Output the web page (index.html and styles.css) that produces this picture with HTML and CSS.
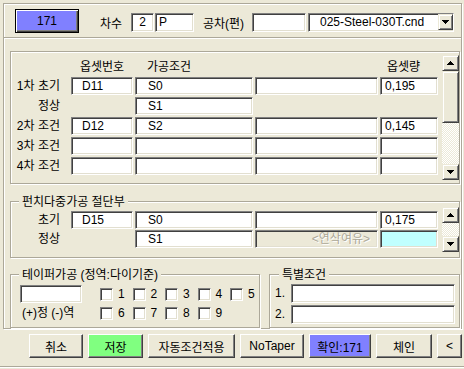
FILE: index.html
```html
<!DOCTYPE html>
<html lang="ko">
<head>
  <meta charset="UTF-8" />
  <meta name="viewport" content="width=device-width, initial-scale=1.0"/>
  <title>옵셋 조건</title>
  <link rel="stylesheet" href="styles.css">
</head>
<body>

<div class="dialog">
  <div class="etched frame">
    <!-- TOP ROW -->
    <div class="top-row">
      <button class="btn btn-default btn-blue top-num">171</button>
      <span class="lbl lbl-chasu">차수</span>
      <div class="field f-cha">2</div>
      <div class="field f-p">P</div>
      <span class="lbl lbl-tol">공차(편)</span>
      <div class="field f-tol"></div>
      <div class="field combo">
        <span>025-Steel-030T.cnd</span>
        <span class="raised combo-btn">
          <svg width="7" height="4" viewBox="0 0 7 4"><path d="M0 0h7v1H6v1H5v1H4v1H3V3H2V2H1V1H0z"/></svg>
        </span>
      </div>
    </div>
    <div class="sep"></div>

    <div class="main">
      <!-- OFFSET TABLE -->
      <div class="etched offset-panel">
        <div class="grid offset-grid">
          <span></span>
          <span class="head h-num">옵셋번호</span>
          <span class="head h-cond">가공조건</span>
          <span></span>
          <span class="head h-amt">옵셋량</span>

          <span class="row-lbl">1차 초기</span>
          <div class="field c1">D11</div>
          <div class="field c2">S0</div>
          <div class="field"></div>
          <div class="field c4">0,195</div>

          <span class="row-lbl">정상</span>
          <span></span>
          <div class="field c2">S1</div>
          <span></span>
          <span></span>

          <span class="row-lbl">2차 조건</span>
          <div class="field c1">D12</div>
          <div class="field c2">S2</div>
          <div class="field"></div>
          <div class="field c4">0,145</div>

          <span class="row-lbl">3차 조건</span>
          <div class="field"></div>
          <div class="field"></div>
          <div class="field"></div>
          <div class="field"></div>

          <span class="row-lbl">4차 조건</span>
          <div class="field"></div>
          <div class="field"></div>
          <div class="field"></div>
          <div class="field"></div>
        </div>
        <div class="scrollbar sb-table">
          <span class="raised sb-btn">
            <svg width="7" height="4" viewBox="0 0 7 4"><path d="M3 0h1v1h1v1h1v1h1v1H0V3h1V2h1V1h1z"/></svg>
          </span>
          <span class="raised sb-thumb"></span>
          <span class="sb-track"></span>
          <span class="raised sb-btn">
            <svg width="7" height="4" viewBox="0 0 7 4"><path d="M0 0h7v1H6v1H5v1H4v1H3V3H2V2H1V1H0z"/></svg>
          </span>
        </div>
      </div>

      <!-- PUNCH -->
      <div class="etched group punch">
        <div class="group-title">펀치다중가공 절단부</div>
        <div class="punch-body">
          <div class="grid punch-grid">
            <span class="row-lbl">초기</span>
            <div class="field c1">D15</div>
            <div class="field c2">S0</div>
            <div class="field"></div>
            <div class="field c4">0,175</div>

            <span class="row-lbl">정상</span>
            <span></span>
            <div class="field c2">S1</div>
            <div class="field disabled">&lt;연삭여유&gt;</div>
            <div class="field cyan"></div>
          </div>
          <div class="scrollbar sb-punch">
            <span class="raised sb-btn">
              <svg width="7" height="4" viewBox="0 0 7 4"><path d="M3 0h1v1h1v1h1v1h1v1H0V3h1V2h1V1h1z"/></svg>
            </span>
            <span class="sb-track"></span>
            <span class="raised sb-btn">
              <svg width="7" height="4" viewBox="0 0 7 4"><path d="M0 0h7v1H6v1H5v1H4v1H3V3H2V2H1V1H0z"/></svg>
            </span>
          </div>
        </div>
      </div>

      <!-- TAPER + SPECIAL -->
      <div class="bottom-groups">
        <div class="etched group taper">
          <div class="group-title">테이퍼가공 (정역:다이기준)</div>
          <div class="taper-body">
            <div class="field taper-in"></div>
            <div class="checks">
              <span class="chk-item"><span class="chk"></span>1</span>
              <span class="chk-item"><span class="chk"></span>2</span>
              <span class="chk-item"><span class="chk"></span>3</span>
              <span class="chk-item"><span class="chk"></span>4</span>
              <span class="chk-item"><span class="chk"></span>5</span>
            </div>
            <span class="taper-lbl">(+)정 (-)역</span>
            <div class="checks">
              <span class="chk-item"><span class="chk"></span>6</span>
              <span class="chk-item"><span class="chk"></span>7</span>
              <span class="chk-item"><span class="chk"></span>8</span>
              <span class="chk-item"><span class="chk"></span>9</span>
            </div>
          </div>
        </div>

        <div class="etched group special">
          <div class="group-title">특별조건</div>
          <div class="special-body">
            <span>1.</span>
            <div class="field"></div>
            <span>2.</span>
            <div class="field"></div>
          </div>
        </div>
      </div>
    </div>
  </div>

  <!-- BUTTONS -->
  <div class="buttons">
    <button class="btn w-cancel">취소</button>
    <button class="btn btn-green w-save">저장</button>
    <button class="btn w-auto">자동조건적용</button>
    <button class="btn w-notaper">NoTaper</button>
    <button class="btn btn-blue w-ok">확인:171</button>
    <button class="btn w-chain">체인</button>
    <button class="btn w-back">&lt;</button>
  </div>
  <div class="footer-line"></div>
</div>

</body>
</html>
```

FILE: styles.css
```css
* {
  box-sizing: border-box;
}

body {
  margin: 0;
  background: #ece9d8;
  font-family: "Liberation Sans", "Noto Sans CJK KR", sans-serif;
  font-size: 12px;
  color: #000;
}

.dialog {
  width: 464px;
  height: 369px;
  padding-top: 3px;
  overflow: hidden;
}

/* etched frame / group lines */
.etched {
  border: 1px solid #aca899;
  box-shadow: inset 1px 1px 0 #fff, 1px 1px 0 #fff;
}

.frame {
  margin-left: 3px;
  width: 459px;
  height: 326px;
}

.top-row {
  display: flex;
  align-items: center;
  height: 33px;
  padding-left: 11px;
}

.sep {
  height: 2px;
  border-top: 1px solid #aca899;
  border-bottom: 1px solid #fff;
}

.main {
  padding: 12px 0 0 6px;
}

/* sunken edit */
.field {
  height: 18px;
  background: #fff;
  border: 1px solid;
  border-color: #808080 #fff #fff #808080;
  box-shadow: inset 1px 1px 0 #404040, inset -1px -1px 0 #e2dfd0;
  line-height: 16px;
  white-space: nowrap;
  overflow: hidden;
}

.raised {
  background: #ece9d8;
  border: 1px solid;
  border-color: #ece9d8 #404040 #404040 #ece9d8;
  box-shadow: inset 1px 1px 0 #fff, inset -1px -1px 0 #808080;
}

.btn {
  height: 24px;
  padding: 0;
  font: inherit;
  color: #000;
  background: #ece9d8;
  border: 1px solid;
  border-color: #fff #404040 #404040 #fff;
  box-shadow: inset -1px -1px 0 #808080;
}

.btn-default {
  border-color: #000;
  box-shadow: inset 1px 1px 0 #fff, inset -1px -1px 0 #404040, inset -2px -2px 0 #808080;
}

.btn-blue {
  background: #8080ff;
}

.btn-green {
  background: #80ff80;
}

/* top row */
.top-num {
  width: 64px;
}

.lbl {
  margin-top: 3px;
}

.lbl-chasu {
  width: 31px;
  margin-left: 21px;
}

.lbl-tol {
  width: 49px;
  margin-left: 9px;
}

.top-row .field {
  height: 19px;
  margin-top: 3px;
  line-height: 17px;
}

.f-cha {
  width: 23px;
  text-align: center;
}

.f-p {
  width: 39px;
  margin-left: 1px;
  padding-left: 3px;
}

.f-tol {
  width: 54px;
}

.combo {
  width: 146px;
  margin-left: 2px;
  display: flex;
  align-items: center;
  justify-content: space-between;
  padding-left: 11px;
}

.combo-btn {
  width: 15px;
  height: 16px;
  display: flex;
  align-items: center;
  justify-content: center;
}

/* offset table */
.offset-panel {
  width: 450px;
  height: 133px;
  display: flex;
  align-items: flex-start;
}

.grid {
  display: grid;
  grid-template-columns: 58px 62px 118px 123px 58px;
  column-gap: 2px;
}

.offset-grid {
  grid-template-rows: 23px repeat(5, 18px);
  row-gap: 2px;
}

.head {
  align-self: end;
  line-height: 16px;
}

.h-num {
  text-align: center;
}

.h-cond {
  padding-left: 12px;
}

.h-amt {
  padding-left: 7px;
}

.row-lbl {
  text-align: right;
  padding-right: 9px;
  line-height: 18px;
  white-space: nowrap;
}

.c1 {
  padding-left: 10px;
}

.c2 {
  padding-left: 12px;
}

.c4 {
  padding-left: 4px;
}

.disabled {
  background: #ece9d8;
  color: #aca899;
  text-shadow: 1px 1px 0 #fff;
  text-align: right;
  padding-right: 7px;
}

.cyan {
  background: #c0ffff;
}

/* scrollbar */
.scrollbar {
  width: 17px;
  margin-left: 4px;
  display: flex;
  flex-direction: column;
}

.sb-table {
  height: 125px;
  margin-top: 3px;
}

.sb-btn {
  height: 16px;
  flex: none;
  display: flex;
  align-items: center;
  justify-content: center;
}

.sb-thumb {
  height: 52px;
  flex: none;
}

.sb-track {
  flex: 1;
  background: repeating-conic-gradient(#fff 0 25%, #ece9d8 0 50%) 0 0 / 2px 2px;
}

/* group boxes */
.group-title {
  width: fit-content;
  margin: -7px 0 0 8px;
  padding: 0 3px;
  line-height: 14px;
  background: #ece9d8;
  white-space: nowrap;
}

.punch {
  width: 450px;
  margin-top: 17px;
  padding-bottom: 9px;
}

.punch-body {
  display: flex;
  align-items: flex-start;
  margin-top: 2px;
}

.punch-grid {
  grid-template-rows: repeat(2, 18px);
  row-gap: 1px;
}

.sb-punch {
  height: 45px;
  margin: -4px 0 -8px 4px;
}

.bottom-groups {
  display: flex;
  gap: 9px;
  margin-top: 16px;
  width: 450px;
}

.taper {
  width: 250px;
  padding-bottom: 5px;
}

.taper-body {
  display: grid;
  grid-template-columns: 80px 1fr;
  grid-template-rows: 18px 18px;
  row-gap: 1px;
  margin-top: 3px;
  padding-left: 9px;
}

.taper-in {
  width: 62px;
}

.taper-lbl {
  padding-left: 2px;
  line-height: 18px;
  white-space: nowrap;
}

.checks {
  display: grid;
  grid-template-columns: repeat(5, 32.5px);
  align-items: center;
}

.chk-item {
  display: flex;
  align-items: center;
  gap: 5px;
}

.chk {
  width: 13px;
  height: 13px;
  background: #fff;
  border: 1px solid;
  border-color: #808080 #fff #fff #808080;
  box-shadow: inset 1px 1px 0 #404040, inset -1px -1px 0 #e2dfd0;
}

.special {
  width: 191px;
  padding-bottom: 3px;
}

.special .group-title {
  margin-left: 9px;
}

.special-body {
  display: grid;
  grid-template-columns: 16px 1fr;
  grid-template-rows: 19px 19px;
  row-gap: 2px;
  margin-top: 2px;
  padding: 0 4px 0 5px;
  line-height: 19px;
}

.special-body .field {
  height: 19px;
}

/* bottom buttons */
.buttons {
  display: flex;
  gap: 5px;
  margin-top: 5px;
  padding-left: 29px;
}

.w-cancel { width: 54px; }
.w-save { width: 55px; }
.w-auto { width: 87px; }
.w-notaper { width: 64px; }
.w-ok { width: 62px; }
.w-chain { width: 56px; }
.w-back { width: 25px; }

.footer-line {
  margin-top: 8px;
  height: 2px;
  border-top: 1px solid #aca899;
  border-bottom: 1px solid #fff;
}
```
